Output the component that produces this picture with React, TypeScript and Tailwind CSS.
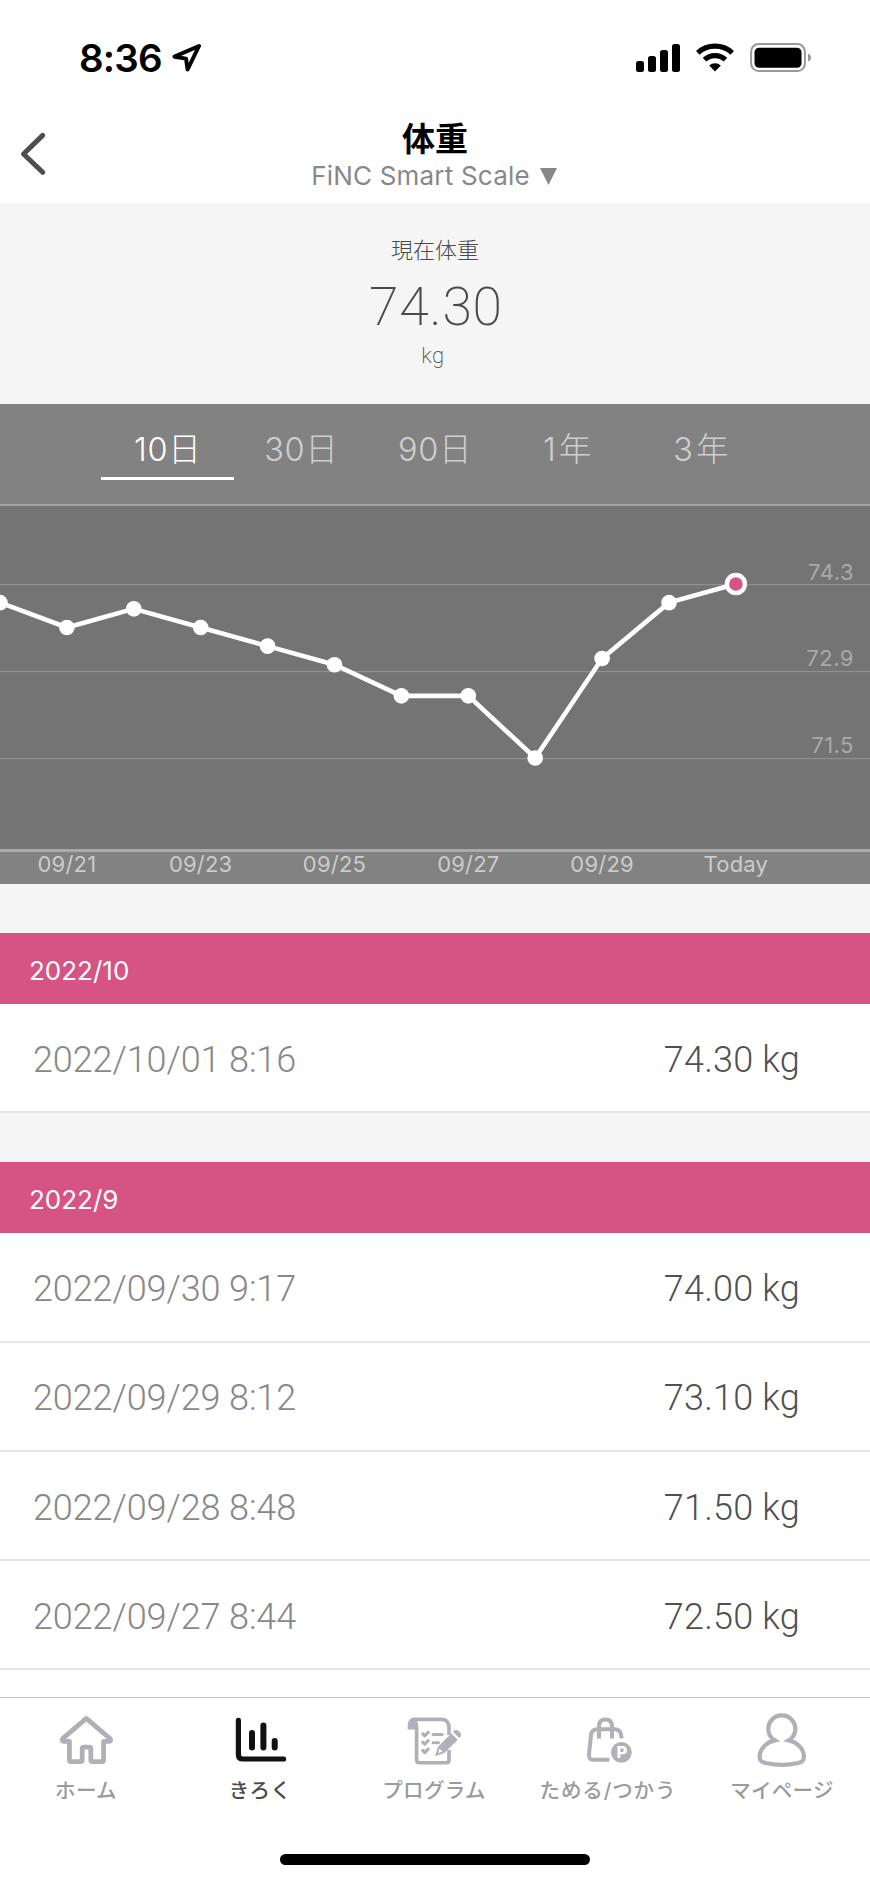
import React, { useState } from 'react';

interface WeightRecord {
  date: string;
  value: string;
}

interface MonthGroup {
  month: string;
  records: WeightRecord[];
}

const RANGES = ['10日', '30日', '90日', '1年', '3年'];

const WEIGHTS = [74.0, 73.6, 73.9, 73.6, 73.3, 73.0, 72.5, 72.5, 71.5, 73.1, 74.0, 74.3];
const X_LABELS = ['09/21', '09/23', '09/25', '09/27', '09/29', 'Today'];
const Y_LABELS = [74.3, 72.9, 71.5];

const GROUPS: MonthGroup[] = [
  { month: '2022/10', records: [{ date: '2022/10/01 8:16', value: '74.30 kg' }] },
  {
    month: '2022/9',
    records: [
      { date: '2022/09/30 9:17', value: '74.00 kg' },
      { date: '2022/09/29 8:12', value: '73.10 kg' },
      { date: '2022/09/28 8:48', value: '71.50 kg' },
      { date: '2022/09/27 8:44', value: '72.50 kg' },
    ],
  },
];

const StatusBar: React.FC = () => (
  <div className="flex h-[116px] items-start justify-between pl-[79px] pr-[59px] pt-[38px]">
    <div className="flex items-center">
      <span className="w-[93px] text-[38.5px] font-semibold leading-[40px] tracking-[-0.8px] text-black">8:36</span>
      <svg width="30" height="30" viewBox="0 0 30 30" fill="none" stroke="#000" strokeWidth="4" strokeLinejoin="round">
        <path d="M27 3 2.5 13.7 14 15.6 15.6 26.5Z" />
      </svg>
    </div>
    <svg className="mt-[5px]" width="176" height="30" viewBox="0 0 176 30">
      <rect x="1" y="18" width="8" height="11" rx="2.5" />
      <rect x="13" y="13" width="8" height="16" rx="2.5" />
      <rect x="25" y="7" width="8" height="22" rx="2.5" />
      <rect x="37" y="1" width="8" height="28" rx="2.5" />
      <g fill="none" stroke="#000">
        <path d="M62.8 9.8a25.5 25.5 0 0 1 34.4 0" strokeWidth="5.2" />
        <path d="M69.5 16.7a15.5 15.5 0 0 1 21 0" strokeWidth="5.2" />
      </g>
      <path d="M74.2 22.6a8.6 8.6 0 0 1 11.6 0L80 28.6Z" />
      <rect x="116.1" y="1.1" width="53.8" height="27" rx="7.5" fill="none" stroke="#999" strokeWidth="2" />
      <rect x="119.5" y="4.8" width="47" height="20" rx="4.5" />
      <path d="M173 10.5q3 1 3 4t-3 4Z" fill="#999" />
    </svg>
  </div>
);

const Header: React.FC = () => (
  <header className="grid h-[87px] grid-cols-[60px_1fr_60px]">
    <button className="flex items-start pl-[18px] pt-[14px]" aria-label="戻る">
      <svg width="30" height="48" viewBox="0 0 30 48" fill="none" stroke="#4d4d4d" strokeWidth="5" strokeLinecap="round" strokeLinejoin="round">
        <path d="M24.7 5.4 5.5 24 24.7 42.3" />
      </svg>
    </button>
    <div className="flex flex-col items-center">
      <h1 className="mt-[4px] text-[33px] font-bold leading-[38px] text-black">体重</h1>
      <div className="flex items-center gap-[10px] pr-[2px] leading-[36px] text-[#888888]">
        <span className="text-[26px] tracking-[0.2px]">FiNC Smart Scale</span>
        <svg width="17" height="17" viewBox="0 0 17 17" fill="currentColor">
          <path d="M0 0H17L8.5 17Z" />
        </svg>
      </div>
    </div>
  </header>
);

const CurrentWeight: React.FC = () => (
  <section className="flex h-[201px] flex-col items-center bg-[#f5f5f5] pt-[31px] text-[#4a4a4a]">
    <p className="text-[22px] font-light leading-[32px]">現在体重</p>
    <p className="mt-[11px] pl-[2px] font-['Roboto',sans-serif] text-[53.5px] font-extralight leading-[60px] tracking-[0.8px]">
      74.30
    </p>
    <p className="mt-[5px] pr-1 font-['Roboto',sans-serif] text-[22px] font-extralight leading-[28px] tracking-[0.4px]">kg</p>
  </section>
);

const WeightChart: React.FC = () => {
  const toY = (kg: number) => 78.5 + (74.3 - kg) * 62.14;
  const points = WEIGHTS.map((kg, i) => ({ x: i * 66.9, y: toY(kg) - 0.5 }));
  const last = points[points.length - 1];

  return (
    <div className="border-t-2 border-[#a2a2a2] bg-[#747474]">
      <svg className="block" width="870" height="343" viewBox="0 0 870 343">
        {Y_LABELS.map((kg) => (
          <g key={kg}>
            <rect x="0" y={toY(kg) - 0.5} width="870" height="1.2" fill="#919191" />
            <text x="854" y={toY(kg) - 5} textAnchor="end" fontSize="22" letterSpacing="0.5" fill="#a9a9a9">
              {kg}
            </text>
          </g>
        ))}
        <polyline points={points.map((p) => `${p.x},${p.y}`).join(' ')} fill="none" stroke="#fff" strokeWidth="4.6" />
        {points.map((p) => (
          <circle key={p.x} cx={p.x} cy={p.y} r="7.8" fill="#fff" />
        ))}
        <circle cx={last.x} cy={last.y} r="11.2" fill="#fff" />
        <circle cx={last.x} cy={last.y} r="6.8" fill="#d65483" />
      </svg>
      <div className="flex h-[35px] border-t-[3px] border-[#ababab] bg-[#828282] text-[#cccccc]">
        {X_LABELS.map((label) => (
          <span key={label} className="w-[133.8px] text-center text-[22px] leading-[24px] tracking-[0.2px]">
            {label}
          </span>
        ))}
      </div>
    </div>
  );
};

const HomeIcon = () => (
  <path
    d="M31.3 8.4 7.6 28.6C6.5 29.7 7.2 31.3 8.6 31.3H14.4V50Q14.4 51.6 16 51.6H25.6Q27.2 51.6 27.2 50V38.6Q27.2 37.2 28.6 37.2H34.4Q35.8 37.2 35.8 38.6V50Q35.8 51.6 37.4 51.6H47Q48.6 51.6 48.6 50V31.3H54C55.6 31.3 56.2 29.7 55 28.6Z"
    fill="none"
    stroke="currentColor"
    strokeWidth="4.8"
    strokeLinejoin="round"
  />
);

const ChartIcon = () => (
  <g fill="none" stroke="currentColor" strokeLinecap="round">
    <path d="M9.4 10.4V44.5Q9.4 49 13.9 49H54.6" strokeWidth="5.2" />
    <path d="M23 23V37.6M34.4 15.4V37.6M45.7 31V37.6" strokeWidth="6" />
  </g>
);

const ProgramIcon = () => (
  <g>
    <path d="M10 9.4H39Q46 9.8 46 18V25M46 40V50Q46 52.8 43.2 52.8H16.4Q13.6 52.8 13.6 50V18" fill="none" stroke="currentColor" strokeWidth="3.6" />
    <path d="M4.7 19.4V15Q5.2 8.4 11 7.6Q14.8 10.5 15.3 16V19.4Z" fill="currentColor" />
    <g fill="none" stroke="currentColor" strokeWidth="3.2" strokeLinecap="round" strokeLinejoin="round">
      <path d="M19.8 23.8 21.8 25.8 25.2 22.4M19.8 32.1 21.8 34.1 25.2 30.7M19.8 40.5 21.8 42.5 25.2 39.1" />
      <path d="M30 24.4H39.2M30 32.7H35.5" strokeWidth="3" />
    </g>
    <path d="M32 46.2 35 36.8 48.3 23.6 54.8 29.8 41.3 43Z" fill="currentColor" />
    <path d="M49.8 21.7Q53 18.4 56.2 21.4Q59.8 24.6 56.4 28Z" fill="currentColor" />
    <path d="M36.4 38.6 39.4 41.5 35.2 43.2Z" fill="#fff" />
  </g>
);

const ShopIcon = () => (
  <g>
    <g fill="none" stroke="currentColor" strokeWidth="4">
      <path d="M32.4 49.8H16.2Q11.6 49.6 12 44.6L14 25Q14.6 19.2 20.4 19.2H37.8Q43 19.2 44 24.4L44.6 28.4" />
      <path d="M22 28.4V16.6Q22 9.6 28.5 9.6T35 16.6V28.4" />
    </g>
    <circle cx="44.4" cy="42.3" r="10.4" fill="currentColor" />
    <text x="44.9" y="48.2" textAnchor="middle" fontSize="16.5" fontWeight="800" fill="#fff">
      P
    </text>
  </g>
);

const PersonIcon = () => (
  <path
    d="M23.8 30.4A13.5 13.5 0 1 1 37.8 30.4C45.5 32 53 38.5 53 47C53 51.2 50.6 52 47 53Q30.8 56.6 14.6 53C11 52 8.6 51.2 8.6 47C8.6 38.5 16.1 32 23.8 30.4Z"
    fill="none"
    stroke="currentColor"
    strokeWidth="4.2"
  />
);

const TABS = [
  { label: 'ホーム', icon: <HomeIcon /> },
  { label: 'きろく', icon: <ChartIcon /> },
  { label: 'プログラム', icon: <ProgramIcon /> },
  { label: 'ためる/つかう', icon: <ShopIcon /> },
  { label: 'マイページ', icon: <PersonIcon /> },
];

const TabBar: React.FC = () => (
  <nav className="flex h-[186px] flex-col items-center border-t border-[#bdbdbd] bg-white">
    <div className="grid w-full grid-cols-5">
      {TABS.map((tab) => (
        <button
          key={tab.label}
          className={`flex flex-col items-center pt-[12px] ${tab.label === 'きろく' ? 'text-[#111111]' : 'text-[#b0b0b8]'}`}
        >
          <svg width="64" height="60" viewBox="0 0 64 60">
            {tab.icon}
          </svg>
          <span
            className={`mt-[6px] whitespace-nowrap pr-[2px] text-[20.5px] font-medium leading-[30px] ${
              tab.label.includes('/') ? 'tracking-[0.9px]' : 'tracking-[0.3px]'
            } ${tab.label === 'きろく' ? 'text-[#4a4a4a]' : 'text-[#9b9b9b]'}`}
          >
            {tab.label}
          </span>
        </button>
      ))}
    </div>
    <div className="mt-[48px] h-[11px] w-[310px] rounded-full bg-black"></div>
  </nav>
);

const App: React.FC = () => {
  const [range, setRange] = useState('10日');

  return (
    <div className="flex h-[1883px] w-[870px] flex-col overflow-hidden bg-white font-['Inter','Noto_Sans_CJK_JP',sans-serif]">
      <StatusBar />
      <Header />
      <CurrentWeight />

      <section className="bg-[#828282]">
        <div className="flex h-[100px] justify-center">
          {RANGES.map((item) => (
            <button
              key={item}
              onClick={() => setRange(item)}
              className={`h-[76px] w-[133.7px] border-b-[3px] pt-[18px] text-[32.5px] font-light leading-[55px] ${
                item.endsWith('年') ? 'tracking-[3px]' : 'tracking-[0.7px]'
              } ${range === item ? 'border-white text-white' : 'border-transparent text-[#cfcfcf]'}`}
            >
              {item}
            </button>
          ))}
        </div>
        <WeightChart />
      </section>

      <main className="min-h-0 flex-1 overflow-hidden bg-[#f5f5f5]">
        {GROUPS.map((group) => (
          <div key={group.month} className="pt-[49px]">
            <h2 className="h-[71px] bg-[#d65483] pl-[29px] pt-[2px] text-[26px] leading-[71px] text-white">
              {group.month}
            </h2>
            {group.records.map((record) => (
              <div
                key={record.date}
                className="flex h-[109.3px] items-center justify-between border-b-2 border-[#e5e5e5] bg-white pl-[33px] pr-[70px] pt-[4px] font-['Roboto',sans-serif] text-[36px] font-light"
              >
                <span className="tracking-[-0.1px] text-[#888888]">{record.date}</span>
                <span className="tracking-[0.2px] text-[#505050]">{record.value}</span>
              </div>
            ))}
          </div>
        ))}
        <div className="h-[40px] bg-white"></div>
      </main>

      <TabBar />
    </div>
  );
};

export default App;
